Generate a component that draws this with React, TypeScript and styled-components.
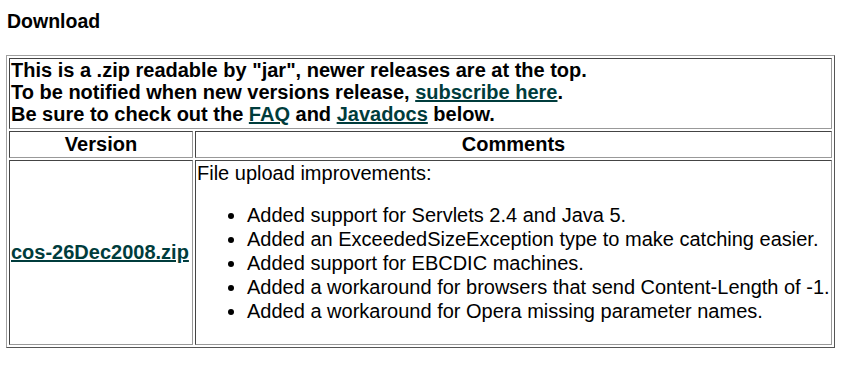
import React from 'react';
import styled, { createGlobalStyle } from 'styled-components';

const GlobalStyle = createGlobalStyle`
  body {
    margin: 6px;
    background: #fff;
    color: #000;
    font-family: "Liberation Sans", Arial, sans-serif;
    font-size: 20px;
  }
`;

const changes = [
  'Added support for Servlets 2.4 and Java 5.',
  'Added an ExceededSizeException type to make catching easier.',
  'Added support for EBCDIC machines.',
  'Added a workaround for browsers that send Content-Length of -1.',
  'Added a workaround for Opera missing parameter names.',
];

export default function App() {
  return (
    <>
      <GlobalStyle />
      <Heading>Download</Heading>
      <Table>
        <tbody>
          <tr>
            <Intro colSpan={2}>
              This is a .zip readable by "jar", newer releases are at the top.
              <br />
              To be notified when new versions release, <Link href="#">subscribe here</Link>.
              <br />
              Be sure to check out the <Link href="#">FAQ</Link> and <Link href="#">Javadocs</Link> below.
            </Intro>
          </tr>
          <tr>
            <HeadCell>Version</HeadCell>
            <HeadCell>Comments</HeadCell>
          </tr>
          <tr>
            <VersionCell>
              <Link href="#">cos-26Dec2008.zip</Link>
            </VersionCell>
            <CommentCell>
              File upload improvements:
              <Changes>
                {changes.map((c) => (
                  <li key={c}>{c}</li>
                ))}
              </Changes>
            </CommentCell>
          </tr>
        </tbody>
      </Table>
    </>
  );
}

const Heading = styled.h4`
  margin: 4px 1px 22px;
  font-size: 19.5px;
  font-weight: 700;
`;
const Table = styled.table`
  width: 829px;
  border: 1px solid;
  border-color: #a0a0a0 #555 #555 #a0a0a0;
  border-spacing: 2px;
`;
const Cell = styled.td`
  border: 1px solid;
  border-color: #444 #999 #999 #444;
  padding: 1px;
`;
const Intro = styled(Cell)`
  font-weight: 700;
  line-height: 22px;
  padding: 0 1px 3px;
`;
const HeadCell = styled(Cell).attrs({ as: 'th' })`
  font-weight: 700;
  text-align: center;
  padding: 1px;
`;
const VersionCell = styled(Cell)`
  font-weight: 700;
  width: 180px;
  vertical-align: middle;
`;
const CommentCell = styled(Cell)`
  vertical-align: top;
`;
const Changes = styled.ul`
  margin: 18px 0 20px;
  padding-left: 50px;
  li { line-height: 24px; }
`;
const Link = styled.a`
  color: #003c3c;
  font-weight: 700;
  text-decoration: underline;
`;
